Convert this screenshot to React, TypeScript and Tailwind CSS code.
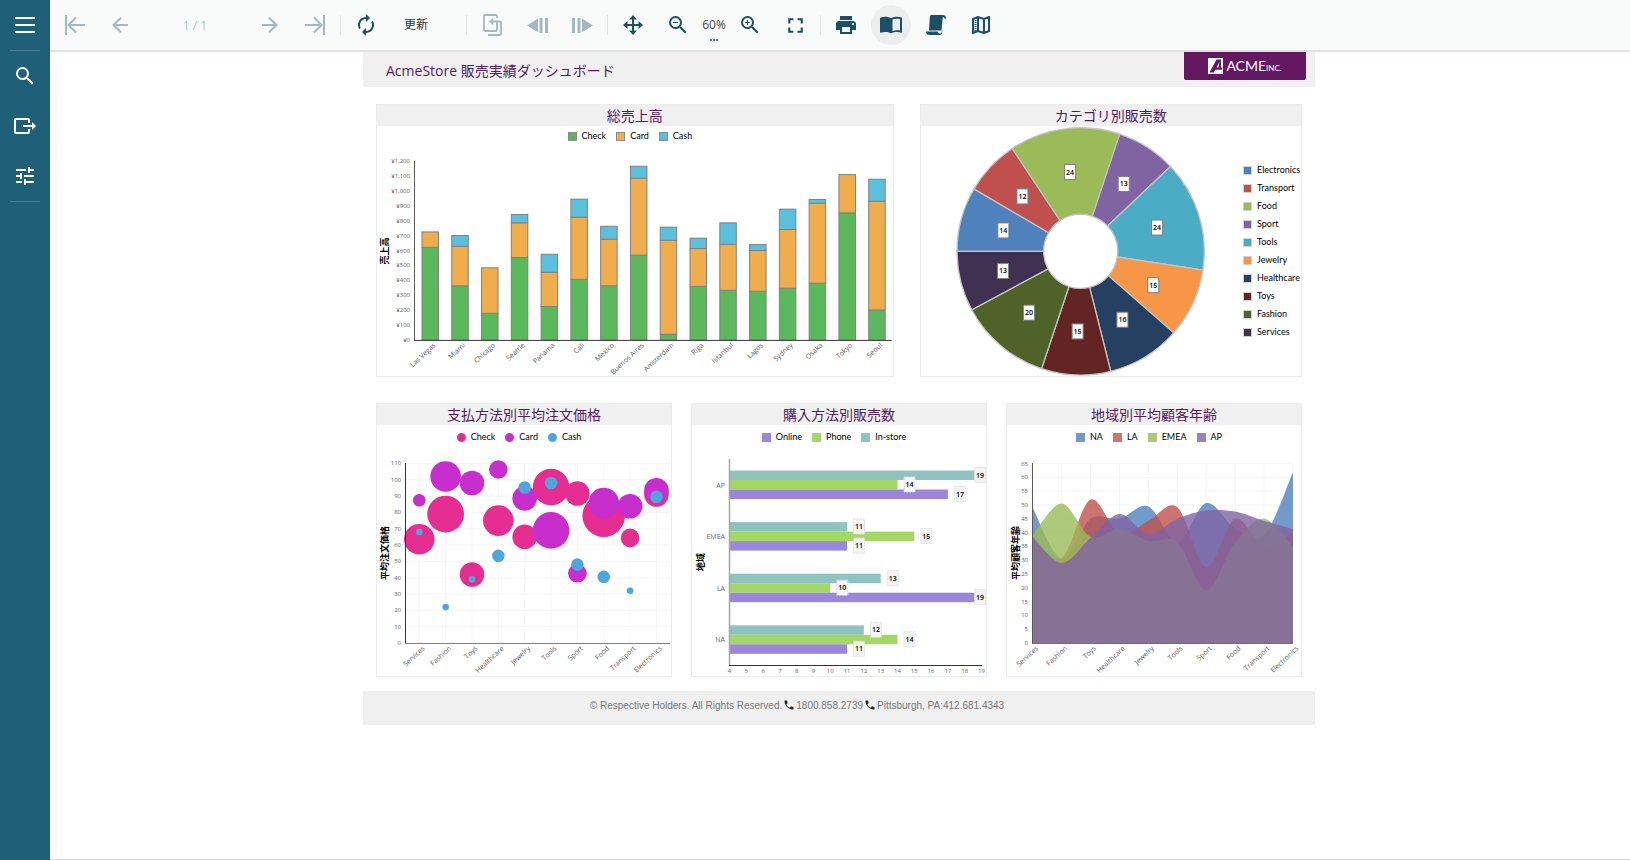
import React from "react";
import {
  MdAutorenew,
  MdFullscreen,
  MdPhone,
  MdPrint,
  MdSearch,
  MdTune,
  MdZoomIn,
  MdZoomOut,
} from "react-icons/md";

const CATEGORIES = [
  "Services",
  "Fashion",
  "Toys",
  "Healthcare",
  "Jewelry",
  "Tools",
  "Sport",
  "Food",
  "Transport",
  "Electronics",
];

/* ---------- icons ---------- */

const MenuIcon = () => (
  <svg width="20" height="16" viewBox="0 0 20 16" fill="currentColor">
    <rect y="0" width="20" height="2" rx="1" />
    <rect y="7" width="20" height="2" rx="1" />
    <rect y="14" width="20" height="2" rx="1" />
  </svg>
);

const ExportIcon = () => (
  <svg width="22" height="16" viewBox="0 0 22 16" fill="none" stroke="currentColor" strokeWidth="2">
    <path d="M15 5V2a1 1 0 0 0-1-1H2a1 1 0 0 0-1 1v12a1 1 0 0 0 1 1h12a1 1 0 0 0 1-1v-3" />
    <path d="M9 8h10" />
    <path d="M18 4l4 4-4 4z" fill="currentColor" stroke="none" />
  </svg>
);

const FirstIcon = () => (
  <svg width="20" height="20" viewBox="0 0 20 20" fill="none" stroke="currentColor" strokeWidth="2">
    <path d="M1 0v20M20 10H3.500M11 2.500L3.500 10l7.500 7.500" />
  </svg>
);

const PrevIcon = () => (
  <svg width="16" height="16" viewBox="0 0 16 16" fill="none" stroke="currentColor" strokeWidth="2">
    <path d="M16 8H1.500M9 .7L1.500 8 9 15.300" />
  </svg>
);

const NextIcon = () => (
  <svg width="16" height="16" viewBox="0 0 16 16" fill="none" stroke="currentColor" strokeWidth="2">
    <path d="M0 8h14.500M7 .7L14.500 8 7 15.300" />
  </svg>
);

const LastIcon = () => (
  <svg width="20" height="20" viewBox="0 0 20 20" fill="none" stroke="currentColor" strokeWidth="2">
    <path d="M19 0v20M0 10h16.500M9 2.500l7.500 7.500L9 17.500" />
  </svg>
);

const BackToParentIcon = () => (
  <svg width="19" height="22" viewBox="0 0 19 22" fill="none" stroke="currentColor" strokeWidth="1.8">
    <path d="M14 4V2a1 1 0 0 0-1-1H2a1 1 0 0 0-1 1v14a1 1 0 0 0 1 1h11a1 1 0 0 0 1-1V7.500H9" />
    <path d="M10 4v7L6 7.500z" fill="currentColor" stroke="none" />
    <path d="M14 7.500h3a1 1 0 0 1 1 1V20a1 1 0 0 1-1 1H5" />
  </svg>
);

const HistoryBackIcon = () => (
  <svg width="21" height="15" viewBox="0 0 21 15" fill="currentColor">
    <path d="M0 7.500L11 .5v14zM12.500 0h3v15h-3zM18 0h3v15h-3z" />
  </svg>
);

const HistoryForwardIcon = () => (
  <svg width="21" height="15" viewBox="0 0 21 15" fill="currentColor">
    <path d="M21 7.500L10 .5v14zM0 0h3v15H0zM5.500 0h3v15h-3z" />
  </svg>
);

const MoveIcon = () => (
  <svg width="20" height="20" viewBox="0 0 20 20" fill="currentColor">
    <path d="M9 3h2v14H9z" />
    <path d="M3 9h14v2H3z" />
    <path d="M10 0l4 4.500H6zM10 20l4-4.500H6zM0 10l4.500-4v8zM20 10l-4.500-4v8z" />
  </svg>
);

const BookIcon = () => (
  <svg width="22" height="18" viewBox="0 0 22 18" fill="currentColor">
    <path d="M11 2.200C8.500.4 3.500.2.6 1.600a1 1 0 0 0-.6.900v13.600c0 .6.4.9.9.7 3-1.200 7.300-1 10.100.7z" />
    <path
      fillRule="evenodd"
      d="M11 2.200C13.500.4 18.500.2 21.400 1.600a1 1 0 0 1 .6.900v13.600c0 .6-.4.9-.9.7-3-1.200-7.300-1-10.100.7zM12.500 3.400v11.700c2.400-.8 5-1 7.500-.5V3.200c-2.500-.7-5.500-.6-7.500.2z"
    />
  </svg>
);

const ScrollIcon = () => (
  <svg width="20" height="20" viewBox="0 0 20 20" fill="currentColor">
    <path d="M5.500 0H17c2 0 3 1.200 3 3.500h-2c0-1-.3-1.500-1.200-1.500L15.500 15.500H3L3.800 2C3.900.7 4.500 0 5.500 0z" />
    <path d="M0 16.500h11.500c.3 1.300 1 2 2.500 2 .9 0 1.500-.5 1.700-1.500l.5-2.500V17c0 2-1 3-2.800 3H3.500C1.500 20 0 18.800 0 16.500z" />
  </svg>
);

const MapIcon = () => (
  <svg width="18" height="18" viewBox="0 0 18 18" fill="none" stroke="currentColor" strokeWidth="2">
    <path d="M1 3l5-2 6 2 5-2v14l-5 2-6-2-5 2zM6 1v14M12 3v14" />
    <path d="M3.500 4v11" strokeDasharray="1 1" />
  </svg>
);

/* ---------- shell ---------- */

function SideButton({ label, children }: { label: string; children: React.ReactNode }) {
  return (
    <button type="button" aria-label={label} className="flex h-[50px] w-full items-center justify-center text-white">
      {children}
    </button>
  );
}

function ToolButton({
  label,
  disabled,
  active,
  children,
}: {
  label: string;
  disabled?: boolean;
  active?: boolean;
  children: React.ReactNode;
}) {
  return (
    <button
      type="button"
      aria-label={label}
      aria-pressed={active}
      disabled={disabled}
      className={
        "flex size-10 shrink-0 items-center justify-center rounded-full text-[#1a4f66] disabled:text-[#a3b9c1] " +
        (active ? "bg-[#eceeed]" : "")
      }
    >
      {children}
    </button>
  );
}

const Separator = () => <div className="h-5 w-px shrink-0 bg-[#e2e6e6]" />;

function Toolbar() {
  return (
    <div role="toolbar" className="flex h-[52px] shrink-0 items-center gap-[5px] overflow-hidden border-b-2 border-[#dfe2e1] bg-[#f9fbfa] pl-[5px]">
      <ToolButton label="最初のページ" disabled><FirstIcon /></ToolButton>
      <ToolButton label="前のページ" disabled><PrevIcon /></ToolButton>
      <input
        aria-label="ページ"
        disabled
        defaultValue="1 / 1"
        className="h-10 w-[100px] shrink-0 bg-transparent text-center text-[12px] text-[#a9c2cb]"
      />
      <ToolButton label="次のページ" disabled><NextIcon /></ToolButton>
      <ToolButton label="最後のページ" disabled><LastIcon /></ToolButton>
      <Separator />
      <ToolButton label="再読み込み"><MdAutorenew size={24} /></ToolButton>
      <button type="button" className="h-10 w-[70px] shrink-0 pl-[13px] text-left text-[12px] text-[#333]">更新</button>
      <Separator />
      <ToolButton label="親レポートに戻る" disabled><BackToParentIcon /></ToolButton>
      <ToolButton label="履歴: 戻る" disabled><HistoryBackIcon /></ToolButton>
      <ToolButton label="履歴: 進む" disabled><HistoryForwardIcon /></ToolButton>
      <Separator />
      <ToolButton label="移動"><MoveIcon /></ToolButton>
      <div className="flex shrink-0 items-center">
        <ToolButton label="縮小"><MdZoomOut size={24} /></ToolButton>
        <button type="button" className="relative h-10 w-8 text-center text-[12px] text-[#444]">
          60%
          <span className="absolute inset-x-0 top-[34px] flex justify-center gap-px">
            <i className="size-[2px] bg-[#5c7683]" />
            <i className="size-[2px] bg-[#5c7683]" />
            <i className="size-[2px] bg-[#5c7683]" />
          </span>
        </button>
        <ToolButton label="拡大"><MdZoomIn size={24} /></ToolButton>
      </div>
      <ToolButton label="全画面"><MdFullscreen size={25} /></ToolButton>
      <Separator />
      <ToolButton label="印刷"><MdPrint size={24} /></ToolButton>
      <ToolButton label="単一ページ" active><BookIcon /></ToolButton>
      <ToolButton label="連続ページ"><ScrollIcon /></ToolButton>
      <ToolButton label="ギャレー"><MapIcon /></ToolButton>
    </div>
  );
}

/* ---------- report parts ---------- */

function Panel({ title, className, children }: { title: string; className: string; children: React.ReactNode }) {
  return (
    <section className={"min-w-0 border border-[#ececec] bg-white " + className}>
      <h2 className="h-[21px] bg-[#f0f0f0] text-center text-[14px] leading-[21px] text-[#551a60]">{title}</h2>
      {children}
    </section>
  );
}

type LegendItem = { name: string; color: string };

function Legend({ items, round, outlined, tall }: { items: LegendItem[]; round?: boolean; outlined?: boolean; tall?: boolean }) {
  return (
    <ul className={"flex items-center justify-center " + (tall ? "h-6" : "h-5")}>
      {items.map((it) => (
        <li key={it.name} className="flex items-center gap-[5px] pr-[10px] font-['Lato',sans-serif] text-[9px] leading-[12px] text-black">
          <span
            className={"size-[9px] " + (round ? "rounded-full " : "") + (outlined ? "border border-[#8c8c8c]" : "")}
            style={{ backgroundColor: it.color }}
          />
          {it.name}
        </li>
      ))}
    </ul>
  );
}

function AxisTitle({ x, y, children }: { x: number; y: number; children: string }) {
  return (
    <text transform={`translate(${x} ${y}) rotate(-90)`} textAnchor="middle" dominantBaseline="central" className="fill-black text-[9px] font-bold">
      {children}
    </text>
  );
}

function SlantedLabel({ x, y, children }: { x: number; y: number; children: string }) {
  return (
    <text transform={`translate(${x} ${y}) rotate(-43)`} textAnchor="end" className="fill-[#595959] text-[7px]">
      {children}
    </text>
  );
}

function Ticks({ values, x, toY, format }: { values: number[]; x: number; toY: (v: number) => number; format?: (v: number) => string }) {
  return (
    <g textAnchor="end" className="fill-[#5c5c5c] text-[6px]">
      {values.map((v) => (
        <text key={v} x={x} y={toY(v) + 2}>
          {format ? format(v) : v}
        </text>
      ))}
    </g>
  );
}

const range = (max: number, step: number) => Array.from({ length: max / step + 1 }, (_, i) => i * step);

/* ---------- total sales ---------- */

// city, then the running totals of check, card and cash
const SALES: [string, number, number, number][] = [
  ["Las Vegas", 622, 725, 725],
  ["Miami", 363, 629, 701],
  ["Chicago", 179, 484, 484],
  ["Seattle", 553, 786, 842],
  ["Panama", 224, 454, 575],
  ["Cali", 407, 824, 945],
  ["Mexico", 363, 676, 763],
  ["Buenos Aires", 569, 1086, 1166],
  ["Amsterdam", 38, 669, 757],
  ["Riga", 360, 613, 683],
  ["Istanbul", 334, 642, 786],
  ["Lagos", 327, 600, 640],
  ["Sydney", 347, 741, 878],
  ["Osaka", 381, 918, 943],
  ["Tokyo", 853, 1110, 1110],
  ["Seoul", 201, 931, 1079],
];
const SALES_COLORS = ["#5cb85c", "#f0ad4e", "#5bc0de"];

function SalesChart() {
  const toY = (v: number) => 194 - v * 0.149;
  return (
    <svg viewBox="0 0 516 230" className="block h-auto w-full overflow-visible">
      <Ticks values={range(1200, 100)} x={33} toY={toY} format={(v) => "¥" + v.toLocaleString("en-US")} />
      <AxisTitle x={7} y={105}>売上高</AxisTitle>
      {SALES.map(([city, ...tops], i) => {
        const cx = 53 + i * 29.800;
        return (
          <g key={city}>
            {tops.map((top, s) => {
              const base = s === 0 ? 0 : tops[s - 1];
              if (top === base) return null;
              return (
                <rect
                  key={s}
                  x={cx - 8}
                  y={toY(top)}
                  width={16.500}
                  height={toY(base) - toY(top)}
                  fill={SALES_COLORS[s]}
                  stroke="#808080"
                />
              );
            })}
            <SlantedLabel x={cx + 6} y={200}>{city}</SlantedLabel>
          </g>
        );
      })}
      <path d="M37.500 15V194.500" stroke="#595959" fill="none" />
      <path d="M37 194.500H515" stroke="#333" fill="none" />
    </svg>
  );
}

/* ---------- category share ---------- */

const SHARE: { name: string; value: number; color: string }[] = [
  { name: "Electronics", value: 14, color: "#4f81bd" },
  { name: "Transport", value: 12, color: "#c0504d" },
  { name: "Food", value: 24, color: "#9bbb59" },
  { name: "Sport", value: 13, color: "#8064a2" },
  { name: "Tools", value: 24, color: "#4bacc6" },
  { name: "Jewelry", value: 15, color: "#f79646" },
  { name: "Healthcare", value: 16, color: "#254061" },
  { name: "Toys", value: 15, color: "#632523" },
  { name: "Fashion", value: 20, color: "#4f6228" },
  { name: "Services", value: 13, color: "#403152" },
];

function ShareChart() {
  const total = SHARE.reduce((sum, s) => sum + s.value, 0);
  const cx = 159.500;
  const cy = 125.300;
  const outer = 123.500;
  const inner = 37;
  const at = (r: number, a: number) => [cx + r * Math.cos(a), cy + r * Math.sin(a)];
  let angle = Math.PI;
  const slices = SHARE.map((s) => {
    const from = angle;
    angle += (s.value / total) * Math.PI * 2;
    return { ...s, from, to: angle };
  });
  return (
    <div className="flex items-center">
      <svg viewBox="0 0 322 250" className="block h-auto min-w-0 flex-1">
        {slices.map((s) => (
          <path
            key={s.name}
            fill={s.color}
            stroke="#c3c3c3"
            strokeWidth={1.300}
            d={`M${at(inner, s.from)} L${at(outer, s.from)} A${outer} ${outer} 0 0 1 ${at(outer, s.to)} L${at(inner, s.to)} A${inner} ${inner} 0 0 0 ${at(inner, s.from)}Z`}
          />
        ))}
        {slices.map((s) => {
          const [x, y] = at(80, (s.from + s.to) / 2);
          return (
            <g key={s.name}>
              <rect x={x - 5.500} y={y - 7.500} width={11} height={15} fill="#fff" stroke="#7f7f7f" />
              <text x={x} y={y + 2.500} textAnchor="middle" className="fill-black text-[7px] font-semibold">
                {s.value}
              </text>
            </g>
          );
        })}
      </svg>
      <ul className="w-[58px] shrink-0">
        {SHARE.map((s) => (
          <li key={s.name} className="flex h-[18px] items-center gap-[5px] font-['Lato',sans-serif] text-[9px] leading-[12px] text-black">
            <span className="size-[9px] shrink-0 border border-[#d0d0d0]" style={{ backgroundColor: s.color }} />
            {s.name}
          </li>
        ))}
      </ul>
    </div>
  );
}

/* ---------- average order price ---------- */

type Bubble = [value: number, radius: number];

const PRICE: { name: string; color: string; points: Bubble[] }[] = [
  {
    name: "Check",
    color: "#e62e92",
    points: [[63.600, 15.300], [79, 18.400], [42, 12.300], [75, 15.300], [65, 12.300], [95.500, 18.300], [91.600, 12.300], [78, 21.300], [64.400, 9.300], [91, 12.300]],
  },
  {
    name: "Card",
    color: "#c72ecd",
    points: [[87.500, 6.300], [102, 15.300], [98, 12.300], [106.300, 9.300], [88.500, 12.300], [69, 18.300], [42.700, 9.300], [85.700, 15.300], [83.800, 12.300], [93.600, 12.300]],
  },
  {
    name: "Cash",
    color: "#4ea6dc",
    points: [[68, 3.300], [22, 3.300], [39, 3.300], [53.400, 6.300], [95.300, 6.300], [98, 6.300], [48, 6.300], [40.500, 6.300], [32, 3.300], [89.600, 6.300]],
  },
];

function PriceChart() {
  const toX = (i: number) => 42.300 + i * 26.350;
  const toY = (v: number) => 194 - v * 1.632;
  return (
    <svg viewBox="0 0 294 227" className="block h-auto w-full">
      <g stroke="#f6f6f6">
        {range(110, 10).map((v) => <path key={v} d={`M29 ${toY(v)}H293`} />)}
        {CATEGORIES.map((c, i) => <path key={c} d={`M${toX(i)} 14V194`} />)}
      </g>
      <Ticks values={range(110, 10)} x={24} toY={toY} />
      {PRICE.map((s) =>
        s.points.map(([v, r], i) => <circle key={s.name + i} cx={toX(i)} cy={toY(v)} r={r} fill={s.color} />)
      )}
      <AxisTitle x={7} y={104}>平均注文価格</AxisTitle>
      <path d="M28.500 14V194" stroke="#333" fill="none" />
      <path d="M28 194.500H293" stroke="#808080" fill="none" />
      {CATEGORIES.map((c, i) => <SlantedLabel key={c} x={toX(i) + 6} y={200}>{c}</SlantedLabel>)}
    </svg>
  );
}

/* ---------- sales by channel ---------- */

const CHANNEL_COLORS = ["#8fc3c0", "#a3d867", "#9b87d9"];
// region, then in-store, phone and online
const CHANNELS: [string, number, number, number][] = [
  ["AP", 19, 14, 17],
  ["EMEA", 11, 15, 11],
  ["LA", 13, 10, 19],
  ["NA", 12, 14, 11],
];

function ChannelChart() {
  const toX = (v: number) => 37.500 + (v - 4) * 16.800;
  const rows = CHANNELS.flatMap(([region, ...values], g) =>
    values.map((v, s) => ({ key: region + s, v, s, y: 21.500 + g * 51.600 + s * 9.500 }))
  );
  return (
    <svg viewBox="0 0 294 227" className="block h-auto w-full">
      {rows.map((b) => (
        <rect key={b.key} x={38} y={b.y} width={toX(b.v) - 38} height={9.500} fill={CHANNEL_COLORS[b.s]} />
      ))}
      {rows.map((b) => {
        const x = Math.min(toX(b.v) + 12, 288);
        return (
          <g key={b.key}>
            <rect x={x - 5.500} y={b.y - 3} width={11} height={15} fill="#f4f4f4" stroke="#dcdcdc" strokeDasharray="2 1" />
            <text x={x} y={b.y + 7} textAnchor="middle" className="fill-black text-[7px] font-semibold">
              {b.v}
            </text>
          </g>
        );
      })}
      <g textAnchor="end" className="fill-[#666] text-[7px]">
        {CHANNELS.map(([region], g) => <text key={region} x={33} y={38.500 + g * 51.500}>{region}</text>)}
      </g>
      <AxisTitle x={8} y={113}>地域</AxisTitle>
      <path d="M37.500 10V216" stroke="#a6a6a6" strokeWidth={1.500} fill="none" />
      <path d="M37 216.500H290" stroke="#333" fill="none" />
      <g textAnchor="middle" className="fill-[#595959] text-[6px]">
        {Array.from({ length: 16 }, (_, i) => i + 4).map((v) => <text key={v} x={toX(v)} y={224}>{v}</text>)}
      </g>
    </svg>
  );
}

/* ---------- customer age ---------- */

const AGES: { name: string; color: string; values: number[] }[] = [
  { name: "NA", color: "#4f81bd", values: [49, 30.500, 45, 45, 49.500, 36.500, 50.700, 41.500, 39, 62] },
  { name: "LA", color: "#c0504d", values: [38.500, 30.800, 52, 39.500, 44.200, 49.200, 27.500, 45, 34.800, 40] },
  { name: "EMEA", color: "#9bbb59", values: [39, 50.500, 38.500, 41.300, 37, 36.500, 19.200, 36.500, 45, 34.800] },
  { name: "AP", color: "#8064a2", values: [38.500, 29, 38, 46.700, 39.400, 45, 48, 47.600, 44.200, 41.300] },
];

function smoothLine(points: [number, number][]) {
  let d = `${points[0][0]} ${points[0][1]}`;
  for (let i = 0; i < points.length - 1; i++) {
    const p0 = points[Math.max(i - 1, 0)];
    const p1 = points[i];
    const p2 = points[i + 1];
    const p3 = points[Math.min(i + 2, points.length - 1)];
    d += ` C${p1[0] + (p2[0] - p0[0]) / 6} ${p1[1] + (p2[1] - p0[1]) / 6} ${p2[0] - (p3[0] - p1[0]) / 6} ${p2[1] - (p3[1] - p1[1]) / 6} ${p2[0]} ${p2[1]}`;
  }
  return d;
}

function AgeChart() {
  const toX = (i: number) => 25.700 + i * 28.920;
  const toY = (v: number) => 194 - v * 2.760;
  return (
    <svg viewBox="0 0 294 227" className="block h-auto w-full">
      <g stroke="#f6f6f6">
        {range(65, 5).map((v) => <path key={v} d={`M26 ${toY(v)}H286`} />)}
        {CATEGORIES.map((c, i) => <path key={c} d={`M${toX(i)} 14V194`} />)}
      </g>
      {AGES.map((s) => (
        <path
          key={s.name}
          d={`M25.700 194L${smoothLine(s.values.map((v, i) => [toX(i), toY(v)]))}L286 194Z`}
          fill={s.color}
          fillOpacity={0.800}
        />
      ))}
      <Ticks values={range(65, 5)} x={21} toY={toY} />
      <AxisTitle x={8} y={104}>平均顧客年齢</AxisTitle>
      <path d="M25.500 14V194.500" stroke="#595959" fill="none" />
      <path d="M25 194.500H286" stroke="#76677f" fill="none" />
      {CATEGORIES.map((c, i) => <SlantedLabel key={c} x={toX(i) + 6} y={200}>{c}</SlantedLabel>)}
    </svg>
  );
}

function Logo() {
  return (
    <div className="mr-[9px] flex h-7 w-[122px] items-center justify-center gap-[3px] rounded-b-[2px] bg-[#631861] text-white">
      <svg width="15" height="16" viewBox="0 0 15 16">
        <rect width="15" height="16" fill="#fff" />
        <path d="M1.500 14.500L8.500 1.500H13v8h1.200v2.200H7.400L5.800 14.500zM8.700 9.500h1.800l1-6z" fill="#631861" fillRule="evenodd" />
      </svg>
      <span className="flex items-baseline pt-0.5 font-['Lato',sans-serif] text-[14px] leading-[16px]">
        ACME<span className="text-[8px]">INC.</span>
      </span>
    </div>
  );
}

const fade = (hex: string) => hex + "cc";

export default function App() {
  return (
    <div className="flex min-h-screen bg-white font-['Open_Sans','Noto_Sans_CJK_JP',sans-serif]">
      <nav className="w-[50px] shrink-0 bg-[#205f78]">
        <SideButton label="メニュー"><MenuIcon /></SideButton>
        <div className="mx-[10px] h-px bg-[#4d7f93]" />
        <SideButton label="検索"><MdSearch size={24} /></SideButton>
        <SideButton label="エクスポート"><ExportIcon /></SideButton>
        <SideButton label="パラメータ"><MdTune size={24} /></SideButton>
        <div className="mx-[10px] h-px bg-[#4d7f93]" />
      </nav>
      <div className="flex min-w-0 flex-1 flex-col border-b border-[#dcdcdc]">
        <Toolbar />
        <main className="pr-0.5">
          <article className="mx-auto max-w-[952px]">
            <header className="flex h-[35px] items-start justify-between bg-[#f0f0f0] pl-[23px]">
              <h1 className="pt-[9px] text-[14px] leading-[20px] text-[#551a60]">AcmeStore 販売実績ダッシュボード</h1>
              <Logo />
            </header>
            <div className="flex flex-col gap-[26px] px-[13px] pt-[17px]">
              <div className="flex items-start gap-[26px]">
                <Panel title="総売上高" className="flex-[518]">
                  <Legend
                    outlined
                    items={[
                      { name: "Check", color: SALES_COLORS[0] },
                      { name: "Card", color: SALES_COLORS[1] },
                      { name: "Cash", color: SALES_COLORS[2] },
                    ]}
                  />
                  <SalesChart />
                </Panel>
                <Panel title="カテゴリ別販売数" className="flex-[382]">
                  <ShareChart />
                </Panel>
              </div>
              <div className="grid grid-cols-3 gap-[19px]">
                <Panel title="支払方法別平均注文価格" className="">
                  <Legend round tall items={PRICE} />
                  <PriceChart />
                </Panel>
                <Panel title="購入方法別販売数" className="">
                  <Legend
                    tall
                    items={[
                      { name: "Online", color: CHANNEL_COLORS[2] },
                      { name: "Phone", color: CHANNEL_COLORS[1] },
                      { name: "In-store", color: CHANNEL_COLORS[0] },
                    ]}
                  />
                  <ChannelChart />
                </Panel>
                <Panel title="地域別平均顧客年齢" className="">
                  <Legend tall items={AGES.map((a) => ({ name: a.name, color: fade(a.color) }))} />
                  <AgeChart />
                </Panel>
              </div>
            </div>
            <footer className="mt-[14px] flex h-[34px] items-center justify-center bg-[#f0f0f0] pr-[84px] pb-[6px] font-['Liberation_Sans',sans-serif] text-[10px] text-[#777]">
              <span>© Respective Holders. All Rights Reserved.</span>
              <MdPhone size={12} className="mx-px text-[#222]" />
              <span>1800.858.2739</span>
              <MdPhone size={12} className="mx-px text-[#222]" />
              <span>Pittsburgh, PA:412.681.4343</span>
            </footer>
          </article>
        </main>
      </div>
    </div>
  );
}
